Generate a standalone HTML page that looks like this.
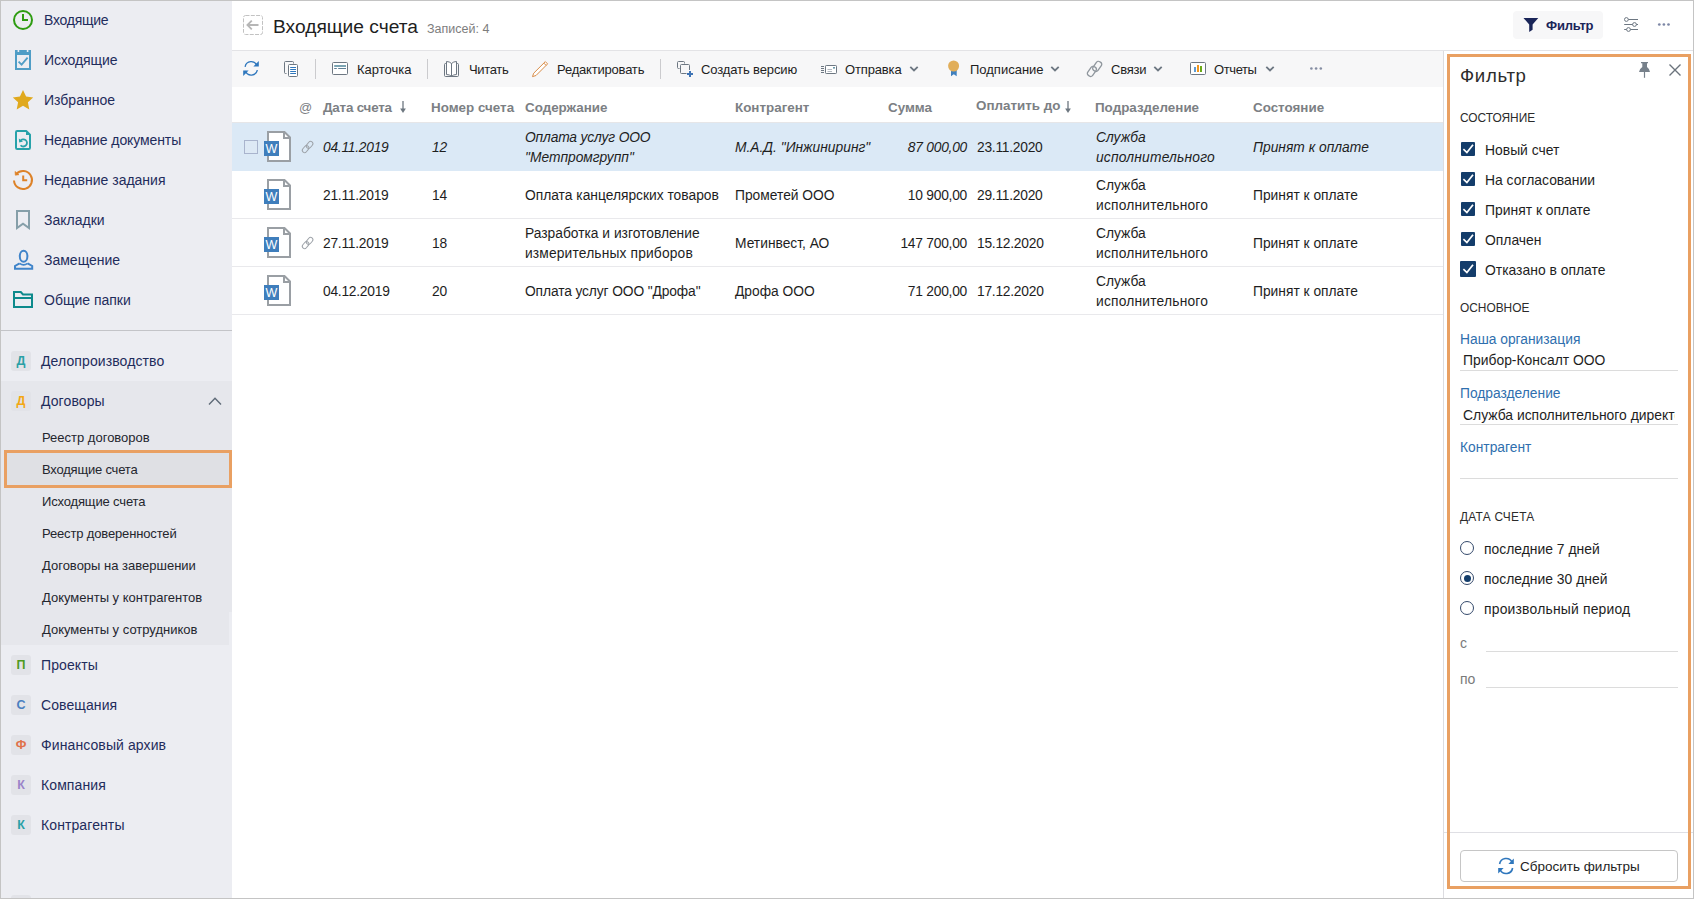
<!DOCTYPE html>
<html lang="ru">
<head>
<meta charset="utf-8">
<title>Входящие счета</title>
<style>
html,body{margin:0;padding:0;}
body{width:1694px;height:899px;overflow:hidden;background:#fff;font-family:"Liberation Sans",sans-serif;color:#1e1e1e;}
#app{position:relative;width:1694px;height:899px;overflow:hidden;background:#fff;}
.abs{position:absolute;}
.t{position:absolute;white-space:nowrap;line-height:16px;}
svg{position:absolute;overflow:visible;}
/* frame */
#frame{position:absolute;left:0;top:0;width:1692px;height:897px;border:1px solid #c4c4c4;border-width:1px 1px 1px 1px;pointer-events:none;z-index:50;}
/* sidebar */
#side{position:absolute;left:0;top:0;width:232px;height:899px;background:#ecedf2;}
#side .nav{font-size:14px;color:#1f2c5c;left:44px;}
#side .mod{font-size:14px;color:#1f2c5c;left:41px;letter-spacing:0.100px;}
#side .sub{font-size:13px;color:#24262e;left:42px;}
#side .badge{position:absolute;left:11px;width:20px;height:20px;border-radius:3px;background:#e2e3e8;font-size:12.500px;font-weight:bold;text-align:center;line-height:21px;}
#group{position:absolute;left:1px;top:381px;width:231px;height:264px;background:#e6e7ec;}
#sel{position:absolute;left:4px;top:450px;width:222px;height:32px;border:3px solid #e9a062;background:#dfe0e4;}
/* main */
#hdrline{position:absolute;left:232px;top:50px;width:1462px;height:1px;background:#e3e3e6;}
#toolbar{position:absolute;left:232px;top:51px;width:1211px;height:36px;background:#f7f7f8;}
.tb{font-size:13px;color:#1e1e1e;top:62px;}
.vsep{position:absolute;top:59px;width:1px;height:20px;background:#cbcbce;}
.th{font-size:13.400px;font-weight:bold;color:#7c8084;top:100px;}
.row{position:absolute;left:232px;width:1211px;height:47px;border-bottom:1px solid #e9e9ec;}
.row.selrow{background:#dbe9f6;border-bottom-color:#dbe9f6;}
.c{font-size:13.800px;color:#1e1e1e;line-height:20px;}
.n{letter-spacing:-0.250px;}
.i{font-style:italic;}
/* filter */
#fline{position:absolute;left:1443px;top:51px;width:1px;height:848px;background:#dcdce0;}
#fbox{position:absolute;left:1447px;top:54px;width:238px;height:829px;border:3px solid #e9a062;}
.fh{font-size:11.900px;color:#2b2b2b;left:1460px;}
.fl{font-size:13.900px;color:#1e1e1e;left:1485px;}
.fk{font-size:13.800px;color:#2f6fae;left:1460px;}
.fv{font-size:13.900px;color:#1e1e1e;left:1463px;}
.uline{position:absolute;height:1px;background:#dcdcdc;}
.cb{position:absolute;left:1461px;width:14px;height:14px;background:#163a66;}
.rb{position:absolute;left:1460px;width:12px;height:12px;border:1px solid #34496b;border-radius:50%;background:#fff;}
</style>
</head>
<body>
<div id="app">

<!-- ============ SIDEBAR ============ -->
<div id="side">
  <div id="group"></div>
  <div class="abs" style="left:229px;top:612px;width:3px;height:33px;background:#ecedf2"></div>
  <div id="sel"></div>

  <!-- nav icons -->
  <svg style="left:0;top:0" width="44" height="320" viewBox="0 0 44 320" fill="none">
    <!-- clock -->
    <circle cx="23" cy="20" r="9" stroke="#2e9c12" stroke-width="2"/>
    <path d="M23 14V20H28" stroke="#2e9c12" stroke-width="2"/>
    <!-- calendar check -->
    <path d="M16 51H30V69H16Z" stroke="#4f9dc6" stroke-width="2"/>
    <rect x="15" y="50" width="16" height="5" fill="#4f9dc6"/>
    <rect x="17.6" y="50" width="1.6" height="2" fill="#ecedf2"/>
    <rect x="26.8" y="50" width="1.6" height="2" fill="#ecedf2"/>
    <path d="M18.6 61.6L21.6 64.6L27.6 57.6" stroke="#4f9dc6" stroke-width="1.8"/>
    <!-- star -->
    <path d="M23 90L26.1 96.6L33.2 97.4L27.9 102.3L29.3 109.4L23 105.8L16.7 109.4L18.1 102.3L12.8 97.4L19.9 96.6Z" fill="#e0a91e"/>
    <!-- recent doc -->
    <path d="M16 132.2Q16 131 17.2 131H26.2L30 134.8V147.8Q30 149 28.8 149H17.2Q16 149 16 147.800Z" stroke="#27a2aa" stroke-width="2" stroke-linejoin="round"/>
    <path d="M26 131.500V135H29.800Z" fill="#27a2aa"/>
    <path d="M20.6 145.2A3.6 3.6 0 1 0 20.4 140.900" stroke="#27a2aa" stroke-width="1.8"/>
    <path d="M18.800 138.600L19.200 142.600L23 141.600Z" fill="#27a2aa"/>
    <!-- history clock -->
    <path d="M14 180.500A9 9 0 1 0 16.400 173.900" stroke="#dd8228" stroke-width="2"/>
    <path d="M15 171.400L15.300 175.200L19 174.700Z" fill="#dd8228" stroke="#dd8228" stroke-width="0.600" stroke-linejoin="round"/>
    <path d="M23.200 175.500V180.300H27.200" stroke="#dd8228" stroke-width="2"/>
    <!-- bookmark -->
    <path d="M17 211H29V228L23 223.700L17 228Z" stroke="#869fa9" stroke-width="2"/>
    <!-- person -->
    <ellipse cx="23.600" cy="256.300" rx="3.800" ry="5.500" stroke="#3f84ca" stroke-width="2"/>
    <path d="M19.600 263.400L15 266V268.800H32.200V266L27.600 263.400" stroke="#3f84ca" stroke-width="2"/>
    <path d="M19.600 263.400Q23.600 266.400 27.600 263.400" stroke="#3f84ca" stroke-width="1.600"/>
    <!-- folder -->
    <path d="M14 292H20.800L23 294.400H32V307H14Z" stroke="#0d8a8c" stroke-width="2"/>
    <path d="M14 298H32" stroke="#0d8a8c" stroke-width="2"/>
  </svg>
  <div class="t nav" style="top:12px;letter-spacing:-0.250px">Входящие</div>
  <div class="t nav" style="top:52px;letter-spacing:-0.100px">Исходящие</div>
  <div class="t nav" style="top:92px">Избранное</div>
  <div class="t nav" style="top:132px;letter-spacing:-0.100px">Недавние документы</div>
  <div class="t nav" style="top:172px">Недавние задания</div>
  <div class="t nav" style="top:212px">Закладки</div>
  <div class="t nav" style="top:252px">Замещение</div>
  <div class="t nav" style="top:292px">Общие папки</div>

  <div class="abs" style="left:1px;top:330px;width:231px;height:1px;background:#c3c4c8"></div>

  <div class="badge" style="top:351px;color:#2aa0a6">Д</div>
  <div class="t mod" style="top:353px">Делопроизводство</div>
  <div class="badge" style="top:391px;color:#f3a712">Д</div>
  <div class="t mod" style="top:393px">Договоры</div>

  <svg style="left:207px;top:395px" width="16" height="12" viewBox="207 395 16 12" fill="none"><path d="M209 404.600L215 398.300L221 404.600" stroke="#5f6b78" stroke-width="1.400"/></svg>
  <div class="t sub" style="top:430px">Реестр договоров</div>
  <div class="t sub" style="top:462px;letter-spacing:-0.200px">Входящие счета</div>
  <div class="t sub" style="top:494px;letter-spacing:-0.150px">Исходящие счета</div>
  <div class="t sub" style="top:526px;letter-spacing:-0.150px">Реестр доверенностей</div>
  <div class="t sub" style="top:558px">Договоры на завершении</div>
  <div class="t sub" style="top:590px">Документы у контрагентов</div>
  <div class="t sub" style="top:622px">Документы у сотрудников</div>

  <div class="badge" style="top:655px;color:#4f9a1e">П</div>
  <div class="t mod" style="top:657px">Проекты</div>
  <div class="badge" style="top:695px;color:#4a7fc0">С</div>
  <div class="t mod" style="top:697px">Совещания</div>
  <div class="badge" style="top:735px;color:#e0714a">Ф</div>
  <div class="t mod" style="top:737px">Финансовый архив</div>
  <div class="badge" style="top:775px;color:#9b84c9">К</div>
  <div class="t mod" style="top:777px">Компания</div>
  <div class="badge" style="top:815px;color:#2aa0a6">К</div>
  <div class="t mod" style="top:817px">Контрагенты</div>
  <div class="badge" style="top:895px;"></div>
</div>

<!-- ============ MAIN ============ -->
<div id="main">
  <!-- header -->
  <svg style="left:243px;top:15px" width="20" height="20" viewBox="0 0 20 20" fill="none"><rect x="0.500" y="0.500" width="19" height="19" rx="2" stroke="#c2c2c2" stroke-dasharray="4 1.300"/><path d="M15.500 10H4.800M8.800 5.600L4.400 10L8.800 14.400" stroke="#b6b6b6" stroke-width="1.800"/></svg>
  <div class="t" id="title" style="left:273px;top:15px;font-size:19.200px;line-height:24px;color:#1e1e1e">Входящие счета</div>
  <div class="t" style="left:427px;top:21px;font-size:12.500px;color:#7d7d7d">Записей: 4</div>

  <div class="abs" style="left:1513px;top:11px;width:90px;height:28px;border-radius:4px;background:#f7f7f8"></div>
  <svg style="left:1523px;top:17px" width="16" height="16" viewBox="0 0 16 16"><path d="M0.500 1H15.300L9.600 7.600V12.800L6.200 15V7.600Z" fill="#1a2558"/></svg>
  <div class="t" style="left:1546px;top:18px;font-size:13px;font-weight:bold;color:#1a2558;letter-spacing:-0.200px">Фильтр</div>
  <svg style="left:1623px;top:16px" width="16" height="17" viewBox="1623 16 16 17" fill="none" stroke="#6d7782" stroke-width="1">
    <path d="M1628.300 19.500H1638M1624.200 24.500H1632.600M1636.400 24.500H1638M1624.200 29.500H1626.600M1630.400 29.500H1638"/>
    <circle cx="1626.400" cy="19.500" r="1.900"/><circle cx="1634.500" cy="24.500" r="1.900"/><circle cx="1628.500" cy="29.500" r="1.900"/>
  </svg>
  <svg style="left:1657px;top:22px" width="14" height="5" viewBox="1657 22 14 5"><circle cx="1659.300" cy="24.500" r="1.350" fill="#7d87a6"/><circle cx="1663.900" cy="24.500" r="1.350" fill="#7d87a6"/><circle cx="1668.500" cy="24.500" r="1.350" fill="#7d87a6"/></svg>

  <div id="hdrline"></div>
  <div id="toolbar"></div>
  <div class="vsep" style="left:315px"></div>
  <div class="vsep" style="left:427px"></div>
  <div class="vsep" style="left:660px"></div>

  <!-- toolbar icons -->
  <svg style="left:232px;top:51px" width="1211" height="38" viewBox="232 51 1211 38" fill="none">
    <!-- refresh -->
    <g stroke="#2f77bd" stroke-width="1.300">
      <path d="M245.100 66.800A6.200 6.200 0 0 1 257 65.700"/>
      <path d="M257.300 70A6.200 6.200 0 0 1 245.400 71.100"/>
    </g>
    <path d="M258.800 61V66.400H253.400Z" fill="#2f77bd"/>
    <path d="M243.200 76V70.600H248.600Z" fill="#2f77bd"/>
    <!-- copy -->
    <path d="M286.500 73.500H285.500Q284.500 73.500 284.500 72.500V62.500Q284.500 61.500 285.500 61.500H292.500Q293.500 61.500 293.500 62.500V63.500" stroke="#6d7782" stroke-width="1"/>
    <rect x="288.500" y="64.500" width="9" height="12" rx="1" stroke="#6d7782" fill="#fff"/>
    <path d="M290.200 67.500H296M290.200 69.500H296M290.200 71.500H296M290.200 73.500H296" stroke="#2f77bd" stroke-width="1"/>
    <!-- card -->
    <rect x="332.500" y="62.500" width="15" height="12" rx="1" stroke="#6d7782" fill="#fff"/>
    <path d="M334.200 66H346" stroke="#6c9aab" stroke-width="1.800"/>
    <path d="M334.200 68.500H336.800M338.200 68.500H346" stroke="#5f7f95" stroke-width="1"/>
    <!-- book -->
    <path d="M446.500 63.500H445.500Q444.500 63.500 444.500 64.500V75.500Q444.500 76.500 445.500 76.500H457.500Q458.500 76.500 458.500 75.500V64.500Q458.500 63.500 457.500 63.500H456.500" stroke="#6d7782"/>
    <path d="M446.500 61.500Q449.500 61.500 451.500 63.500Q453.500 61.500 456.500 61.500V74.500Q453.500 74.500 451.500 76.300Q449.500 74.500 446.500 74.500Z" stroke="#6d7782" fill="#fff"/>
    <path d="M451.500 63.500V76.200" stroke="#6d7782"/>
    <!-- pencil -->
    <path d="M545.300 61.600L547.600 63.900L536 75.500L532.500 76.600L533.700 73.200Z" stroke="#d98c47" fill="#fff" stroke-linejoin="round"/>
    <path d="M543.800 63.100L546.100 65.400" stroke="#d98c47"/>
    <!-- create version -->
    <path d="M679.500 68.500H678.500Q677.500 68.500 677.500 67.500V62.500Q677.500 61.500 678.500 61.500H683.500Q684.500 61.500 684.500 62.500V63.500" stroke="#6d7782"/>
    <path d="M686.500 73.500H681.500Q680.500 73.500 680.500 72.500V65.500Q680.500 64.500 681.500 64.500H688.500Q689.500 64.500 689.500 65.500V70" stroke="#6d7782"/>
    <path d="M690 71V77M687 74H693" stroke="#3f74b5" stroke-width="2"/>
    <!-- send -->
    <path d="M821 66.500H824M821 68.500H824M821 70.500H824M821 72.500H824" stroke="#6d7782"/>
    <rect x="825.500" y="65.500" width="11" height="8" rx="0.800" stroke="#6d7782" fill="#fff"/>
    <rect x="833" y="67" width="2" height="1.600" fill="#6c9aab"/>
    <path d="M827.500 69.500H832M827.500 71.500H832" stroke="#b3b9c0"/>
    <!-- chevrons -->
    <g stroke="#6d7782" stroke-width="1.800">
      <path d="M910.300 66.800L914 70.500L917.700 66.800"/>
      <path d="M1051.300 66.800L1055 70.500L1058.700 66.800"/>
      <path d="M1154.300 66.800L1158 70.500L1161.700 66.800"/>
      <path d="M1266.300 66.800L1270 70.500L1273.700 66.800"/>
    </g>
    <!-- medal -->
    <path d="M951 70L951 76.300L953.800 74.300L956.700 76.300V70Z" fill="#3f80bf"/>
    <circle cx="953.600" cy="66" r="5.500" fill="#e1ae5a"/>
    <!-- chain -->
    <g stroke="#8f969d" stroke-width="1.300">
      <rect x="-3" y="-5.300" width="6" height="10.600" rx="2.400" transform="translate(1097.200,66.400) rotate(35)"/>
      <rect x="-3" y="-5.300" width="6" height="10.600" rx="2.400" transform="translate(1091.900,71.400) rotate(35)"/>
    </g>
    <!-- report -->
    <rect x="1190.500" y="62.500" width="15" height="12" rx="1" stroke="#6d7782" fill="#fff"/>
    <rect x="1194" y="67" width="2" height="5" fill="#5f9cd5"/>
    <rect x="1197" y="65" width="2" height="7" fill="#f3961c"/>
    <rect x="1200" y="66" width="2" height="6" fill="#6aaa17"/>
    <!-- more -->
    <circle cx="1311.400" cy="68.500" r="1.300" fill="#858da2"/><circle cx="1316.100" cy="68.500" r="1.300" fill="#858da2"/><circle cx="1320.800" cy="68.500" r="1.300" fill="#858da2"/>
  </svg>

  <div class="t tb" style="left:357px">Карточка</div>
  <div class="t tb" style="left:469px;letter-spacing:-0.350px">Читать</div>
  <div class="t tb" style="left:557px;letter-spacing:-0.200px">Редактировать</div>
  <div class="t tb" style="left:701px;letter-spacing:-0.120px">Создать версию</div>
  <div class="t tb" style="left:845px;letter-spacing:-0.150px">Отправка</div>
  <div class="t tb" style="left:970px">Подписание</div>
  <div class="t tb" style="left:1111px;letter-spacing:-0.250px">Связи</div>
  <div class="t tb" style="left:1214px;letter-spacing:-0.400px">Отчеты</div>

  <!-- table header -->
  <div class="t th" style="left:299px;font-weight:normal;font-size:13px">@</div>
  <div class="t th" style="left:323px;letter-spacing:-0.200px">Дата счета</div>
  <div class="t th" style="left:431px">Номер счета</div>
  <div class="t th" style="left:525px">Содержание</div>
  <div class="t th" style="left:735px">Контрагент</div>
  <div class="t th" style="left:888px">Сумма</div>
  <div class="t th" style="left:976px;top:98px">Оплатить до</div>
  <div class="t th" style="left:1095px">Подразделение</div>
  <div class="t th" style="left:1253px">Состояние</div>
  <svg style="left:399px;top:100px" width="8" height="14" viewBox="0 0 8 14"><path d="M4 1V11" stroke="#6d7780" stroke-width="1.300"/><path d="M1.100 8.600H6.900L4 12.900Z" fill="#6d7780"/></svg>
  <svg style="left:1064px;top:100px" width="8" height="14" viewBox="0 0 8 14"><path d="M4 1V11" stroke="#6d7780" stroke-width="1.300"/><path d="M1.100 8.600H6.900L4 12.900Z" fill="#6d7780"/></svg>

  <!-- rows -->
  <div class="abs" style="left:232px;top:122px;width:1211px;height:1px;background:#e6e6e8"></div>
  <div class="row selrow" style="top:123px"></div>
  <div class="row" style="top:171px"></div>
  <div class="row" style="top:219px"></div>
  <div class="row" style="top:267px"></div>
  <!-- row 12 -->
  <div class="abs" style="left:244px;top:140px;width:12px;height:12px;border:1px solid #a9b4cd;background:#dde9f5"></div>
  <svg style="left:262px;top:130px" width="32" height="34" viewBox="262 130 32 34" fill="none">
    <path d="M268 132H284.500L290 137.500V161H268Z" fill="#fff" stroke="#9a9fa4" stroke-width="2"/>
    <path d="M284 132V138H290" stroke="#9a9fa4" stroke-width="2"/>
    <rect x="264" y="141" width="15" height="15" fill="#3f7ebc"/>
    <text x="271.500" y="153.300" text-anchor="middle" font-family="Liberation Sans, sans-serif" font-size="12.500" fill="#fff">W</text>
  </svg>
  <svg style="left:300px;top:139px" width="16" height="16" viewBox="300 139 16 16" fill="none" stroke="#9da2a8" stroke-width="1">
    <rect x="-2.300" y="-3.800" width="4.600" height="7.600" rx="2.300" transform="translate(309.600,144.900) rotate(40)"/>
    <rect x="-2.300" y="-3.800" width="4.600" height="7.600" rx="2.300" transform="translate(305.600,149.100) rotate(40)"/>
  </svg>
  <div class="t c n i" style="left:323px;top:138px">04.11.2019</div>
  <div class="t c n i" style="left:432px;top:138px">12</div>
  <div class="t c i" style="left:525px;top:128px"><span style="letter-spacing:-0.150px">Оплата услуг ООО</span><br>"Метпромгрупп"</div>
  <div class="t c i" style="left:735px;top:138px">М.А.Д. "Инжиниринг"</div>
  <div class="t c n i" style="left:867px;width:100px;text-align:right;top:138px">87 000,00</div>
  <div class="t c n" style="left:977px;top:138px">23.11.2020</div>
  <div class="t c i" style="left:1096px;top:128px">Служба<br><span style="letter-spacing:0.200px">исполнительного</span></div>
  <div class="t c i" style="left:1253px;top:138px">Принят к оплате</div>
  <!-- row 14 -->
  <svg style="left:262px;top:178px" width="32" height="34" viewBox="262 130 32 34" fill="none">
    <path d="M268 132H284.500L290 137.500V161H268Z" fill="#fff" stroke="#9a9fa4" stroke-width="2"/>
    <path d="M284 132V138H290" stroke="#9a9fa4" stroke-width="2"/>
    <rect x="264" y="141" width="15" height="15" fill="#3f7ebc"/>
    <text x="271.500" y="153.300" text-anchor="middle" font-family="Liberation Sans, sans-serif" font-size="12.500" fill="#fff">W</text>
  </svg>
  <div class="t c n" style="left:323px;top:186px">21.11.2019</div>
  <div class="t c n" style="left:432px;top:186px">14</div>
  <div class="t c" style="left:525px;top:186px">Оплата канцелярских товаров</div>
  <div class="t c" style="left:735px;top:186px">Прометей ООО</div>
  <div class="t c n" style="left:867px;width:100px;text-align:right;top:186px">10 900,00</div>
  <div class="t c n" style="left:977px;top:186px">29.11.2020</div>
  <div class="t c" style="left:1096px;top:176px">Служба<br><span style="letter-spacing:0.200px">исполнительного</span></div>
  <div class="t c" style="left:1253px;top:186px">Принят к оплате</div>
  <!-- row 18 -->
  <svg style="left:262px;top:226px" width="32" height="34" viewBox="262 130 32 34" fill="none">
    <path d="M268 132H284.500L290 137.500V161H268Z" fill="#fff" stroke="#9a9fa4" stroke-width="2"/>
    <path d="M284 132V138H290" stroke="#9a9fa4" stroke-width="2"/>
    <rect x="264" y="141" width="15" height="15" fill="#3f7ebc"/>
    <text x="271.500" y="153.300" text-anchor="middle" font-family="Liberation Sans, sans-serif" font-size="12.500" fill="#fff">W</text>
  </svg>
  <svg style="left:300px;top:235px" width="16" height="16" viewBox="300 139 16 16" fill="none" stroke="#9da2a8" stroke-width="1">
    <rect x="-2.300" y="-3.800" width="4.600" height="7.600" rx="2.300" transform="translate(309.600,144.900) rotate(40)"/>
    <rect x="-2.300" y="-3.800" width="4.600" height="7.600" rx="2.300" transform="translate(305.600,149.100) rotate(40)"/>
  </svg>
  <div class="t c n" style="left:323px;top:234px">27.11.2019</div>
  <div class="t c n" style="left:432px;top:234px">18</div>
  <div class="t c" style="left:525px;top:224px">Разработка и изготовление<br><span style="letter-spacing:0.150px">измерительных приборов</span></div>
  <div class="t c" style="left:735px;top:234px">Метинвест, АО</div>
  <div class="t c n" style="left:867px;width:100px;text-align:right;top:234px">147 700,00</div>
  <div class="t c n" style="left:977px;top:234px">15.12.2020</div>
  <div class="t c" style="left:1096px;top:224px">Служба<br><span style="letter-spacing:0.200px">исполнительного</span></div>
  <div class="t c" style="left:1253px;top:234px">Принят к оплате</div>
  <!-- row 20 -->
  <svg style="left:262px;top:274px" width="32" height="34" viewBox="262 130 32 34" fill="none">
    <path d="M268 132H284.500L290 137.500V161H268Z" fill="#fff" stroke="#9a9fa4" stroke-width="2"/>
    <path d="M284 132V138H290" stroke="#9a9fa4" stroke-width="2"/>
    <rect x="264" y="141" width="15" height="15" fill="#3f7ebc"/>
    <text x="271.500" y="153.300" text-anchor="middle" font-family="Liberation Sans, sans-serif" font-size="12.500" fill="#fff">W</text>
  </svg>
  <div class="t c n" style="left:323px;top:282px">04.12.2019</div>
  <div class="t c n" style="left:432px;top:282px">20</div>
  <div class="t c" style="left:525px;top:282px;letter-spacing:-0.120px">Оплата услуг ООО "Дрофа"</div>
  <div class="t c" style="left:735px;top:282px">Дрофа ООО</div>
  <div class="t c n" style="left:867px;width:100px;text-align:right;top:282px">71 200,00</div>
  <div class="t c n" style="left:977px;top:282px">17.12.2020</div>
  <div class="t c" style="left:1096px;top:272px">Служба<br><span style="letter-spacing:0.200px">исполнительного</span></div>
  <div class="t c" style="left:1253px;top:282px">Принят к оплате</div>
</div>

<!-- ============ FILTER ============ -->
<div id="filter">
  <div id="fline"></div>
  <div class="abs" style="left:1444px;top:832px;width:250px;height:1px;background:#dfdfe4"></div>
  <div id="fbox"></div>
  <div class="t" style="left:1460px;top:64px;font-size:18.600px;line-height:24px;letter-spacing:0.700px;color:#2c2c2c">Фильтр</div>
  <!-- pin -->
  <svg style="left:1638px;top:61px" width="14" height="18" viewBox="1638 61 14 18"><path d="M1641 62H1648V63.200H1647L1647 67Q1649.600 68.800 1650 72H1639Q1639.400 68.800 1642.300 67V63.200H1641Z" fill="#77818b"/><path d="M1644.500 72V77.800" stroke="#77818b" stroke-width="1.200"/></svg>
  <!-- close -->
  <svg style="left:1668px;top:63px" width="14" height="14" viewBox="1668 63 14 14"><path d="M1669.500 64.500L1680.500 75.500M1680.500 64.500L1669.500 75.500" stroke="#6b737c" stroke-width="1.400"/></svg>

  <div class="t fh" style="top:110px">СОСТОЯНИЕ</div>
  <svg style="left:1461px;top:142px" width="14" height="14" viewBox="0 0 14 14" fill="none"><rect width="14" height="14" rx="1" fill="#143d6b"/><path d="M2.400 7.200L5.900 10.600L12 2.700" stroke="#fff" stroke-width="1.700"/></svg>
  <div class="t fl" style="top:142px">Новый счет</div>
  <svg style="left:1461px;top:172px" width="14" height="14" viewBox="0 0 14 14" fill="none"><rect width="14" height="14" rx="1" fill="#143d6b"/><path d="M2.400 7.200L5.900 10.600L12 2.700" stroke="#fff" stroke-width="1.700"/></svg>
  <div class="t fl" style="top:172px">На согласовании</div>
  <svg style="left:1461px;top:202px" width="14" height="14" viewBox="0 0 14 14" fill="none"><rect width="14" height="14" rx="1" fill="#143d6b"/><path d="M2.400 7.200L5.900 10.600L12 2.700" stroke="#fff" stroke-width="1.700"/></svg>
  <div class="t fl" style="top:202px">Принят к оплате</div>
  <svg style="left:1461px;top:232px" width="14" height="14" viewBox="0 0 14 14" fill="none"><rect width="14" height="14" rx="1" fill="#143d6b"/><path d="M2.400 7.200L5.900 10.600L12 2.700" stroke="#fff" stroke-width="1.700"/></svg>
  <div class="t fl" style="top:232px">Оплачен</div>
  <div class="abs" style="left:1460px;top:261px;width:16px;height:16px;border-radius:1px;background:#143d6b"></div>
  <svg style="left:1461px;top:262px" width="14" height="14" viewBox="0 0 14 14" fill="none"><rect width="14" height="14" rx="1" fill="#143d6b"/><path d="M2.400 7.200L5.900 10.600L12 2.700" stroke="#fff" stroke-width="1.700"/></svg>
  <div class="t fl" style="top:262px">Отказано в оплате</div>

  <div class="t fh" style="top:300px">ОСНОВНОЕ</div>
  <div class="t fk" style="top:332px">Наша организация</div>
  <div class="t fv" style="top:352px">Прибор-Консалт ООО</div>
  <div class="uline" style="left:1460px;top:370px;width:218px"></div>
  <div class="t fk" style="top:386px">Подразделение</div>
  <div class="t fv" style="top:407px;width:212px;overflow:hidden">Служба исполнительного директора</div>
  <div class="uline" style="left:1460px;top:424px;width:218px"></div>
  <div class="t fk" style="top:440px">Контрагент</div>
  <div class="uline" style="left:1460px;top:478px;width:218px"></div>

  <div class="t fh" style="top:509px;letter-spacing:0.250px">ДАТА СЧЕТА</div>
  <div class="rb" style="top:541px"></div>
  <div class="t fl" style="left:1484px;top:541px">последние 7 дней</div>
  <div class="rb" style="top:571px"></div>
  <div class="abs" style="left:1463.500px;top:574.500px;width:7px;height:7px;border-radius:50%;background:#143d6b"></div>
  <div class="t fl" style="left:1484px;top:571px">последние 30 дней</div>
  <div class="rb" style="top:601px"></div>
  <div class="t fl" style="left:1484px;top:601px;letter-spacing:0.200px">произвольный период</div>
  <div class="t" style="left:1460px;top:635px;font-size:14px;color:#7a7a7a">с</div>
  <div class="uline" style="left:1486px;top:651px;width:192px"></div>
  <div class="t" style="left:1460px;top:671px;font-size:14px;color:#7a7a7a">по</div>
  <div class="uline" style="left:1486px;top:687px;width:192px"></div>

  <div class="abs" style="left:1460px;top:850px;width:216px;height:30px;border:1px solid #c6c6c6;border-radius:4px;background:#fff"></div>
  <svg style="left:1497px;top:857px" width="18" height="18" viewBox="1497 857 18 18" fill="none">
    <g stroke="#2f77bd" stroke-width="1.600"><path d="M1499.600 864A6.600 6.600 0 0 1 1512 862.100"/><path d="M1512.600 868A6.600 6.600 0 0 1 1500.200 869.900"/></g>
    <path d="M1513.800 858.500V863.900H1508.400Z" fill="#2f77bd"/><path d="M1498.200 873.500V868.100H1503.600Z" fill="#2f77bd"/>
  </svg>
  <div class="t" style="left:1520px;top:859px;font-size:13.500px;color:#1e1e1e">Сбросить фильтры</div>
</div>

<div id="frame"></div>
</div>
</body>
</html>
